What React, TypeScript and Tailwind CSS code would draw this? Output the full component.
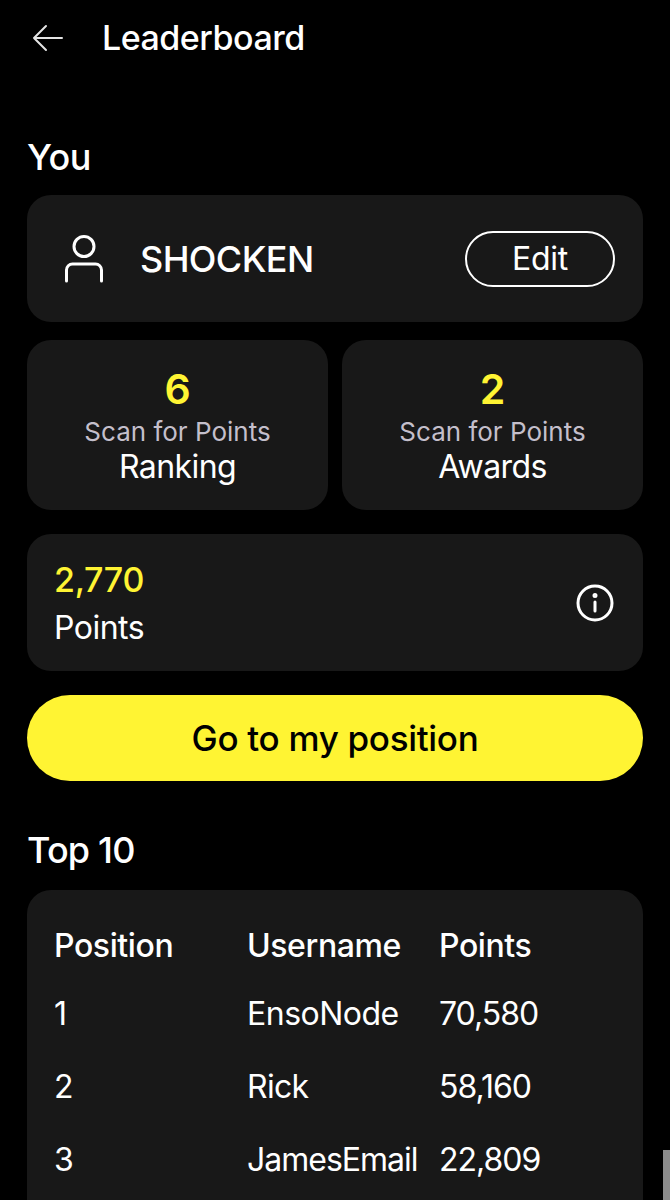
import React from "react";

const font = { fontFamily: '"Inter", "Liberation Sans", sans-serif' };

const rows = [
  { pos: "1", name: "EnsoNode", pts: "70,580", nameClass: "tracking-[-0.5px]" },
  { pos: "2", name: "Rick", pts: "58,160", nameClass: "tracking-[-0.7px]" },
  { pos: "3", name: "JamesEmail", pts: "22,809", nameClass: "tracking-[-1px]" },
];

function Stat({ value, label }: { value: string; label: string }) {
  return (
    <div className="flex-1 h-[170px] rounded-[24px] bg-[#181818] flex flex-col items-center pt-[28px]">
      <div className="text-[41px] leading-[42px] font-semibold text-[#fff433]">{value}</div>
      <div className="text-[26px] leading-[30px] mt-[7px] text-[#c4bfcb]">Scan for Points</div>
      <div className="text-[32px] leading-[40px] mt-0 tracking-[-0.6px] text-white">{label}</div>
    </div>
  );
}

export default function App() {
  return (
    <div className="relative w-[670px] h-[1200px] overflow-hidden bg-black text-white" style={font}>
      <header className="h-[76px] flex items-center pl-[31px]">
        <svg width="32" height="28" viewBox="0 0 32 28" fill="none" stroke="#e4e4e4" strokeWidth="2" strokeLinecap="round" strokeLinejoin="round">
          <path d="M31 14H3M15 2 3 14l12 12" />
        </svg>
        <h1 className="ml-[39px] text-[34px] leading-[40px] font-medium tracking-[-0.5px]">Leaderboard</h1>
      </header>

      <main className="px-[27px]">
        <h2 className="mt-[59px] text-[36px] leading-[44px] font-medium tracking-[-0.5px]">You</h2>

        <section className="mt-[16px] h-[127px] rounded-[24px] bg-[#181818] flex items-center pl-[37px] pr-[28px]">
          <svg width="40" height="48" viewBox="0 0 40 48" fill="none" stroke="white" strokeWidth="3" strokeLinecap="round" strokeLinejoin="round">
            <circle cx="20" cy="11.5" r="10" />
            <path d="M2.5 46V35a6 6 0 0 1 6-6h23a6 6 0 0 1 6 6v11" />
          </svg>
          <span className="ml-[36px] text-[36px] leading-[44px] font-medium tracking-[-0.6px]">SHOCKEN</span>
          <button className="ml-auto w-[150px] h-[56px] rounded-full border-2 border-white text-[32px] leading-[40px] tracking-[-0.3px]">Edit</button>
        </section>

        <section className="mt-[18px] flex gap-[14px]">
          <Stat value="6" label="Ranking" />
          <Stat value="2" label="Awards" />
        </section>

        <section className="mt-[24px] h-[137px] rounded-[24px] bg-[#181818] flex items-center justify-between pl-[27px] pr-[29px]">
          <div>
            <div className="text-[34px] leading-[44px] font-medium tracking-[-0.3px] text-[#fff433]">2,770</div>
            <div className="mt-[6px] text-[32px] leading-[40px] tracking-[-0.5px]">Points</div>
          </div>
          <svg width="38" height="38" viewBox="0 0 38 38" fill="none" stroke="white" strokeWidth="3" strokeLinecap="round">
            <circle cx="19" cy="19" r="17" />
            <path d="M19 18v9" />
            <circle cx="19" cy="11.5" r="1" fill="white" />
          </svg>
        </section>

        <button className="mt-[24px] w-full h-[86px] rounded-full bg-[#fff433] text-black text-[35px] leading-[44px] font-medium tracking-[-0.3px]">
          Go to my position
        </button>

        <h2 className="mt-[47px] text-[36px] leading-[44px] font-medium tracking-[-0.8px]">Top 10</h2>

        <section className="mt-[18px] h-[400px] rounded-[24px] bg-[#181818] px-[27px] pt-[34px]">
          <div className="grid grid-cols-[193px_192px_1fr] text-[32px] leading-[44px] font-medium tracking-[-0.4px]">
            <div>Position</div>
            <div>Username</div>
            <div>Points</div>
          </div>
          <div className="mt-[24px] flex flex-col gap-[29px]">
            {rows.map((r) => (
              <div key={r.pos} className="grid grid-cols-[193px_192px_1fr] text-[32px] leading-[44px]">
                <div>{r.pos}</div>
                <div className={r.nameClass}>{r.name}</div>
                <div className="tracking-[-1px]">{r.pts}</div>
              </div>
            ))}
          </div>
        </section>
      </main>

      <div className="absolute right-0 top-[1150px] w-[7px] h-[50px] bg-[#8c8c8c]" />
    </div>
  );
}
